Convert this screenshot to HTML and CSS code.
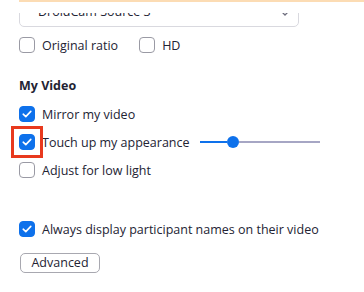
FILE: index.html
```html
<!DOCTYPE html>
<html>
<head>
<meta charset="utf-8">
<link rel="stylesheet" href="styles.css">
</head>
<body>
<div class="panel">
  <div class="accent"></div>
  <div class="select-clip">
    <div class="select">
      <span class="select-text">DroidCam Source 3</span>
      <svg class="chev" width="8" height="5" viewBox="0 0 8 5"><path d="M1 1 L4 4 L7 1" fill="none" stroke="#6e6e7e" stroke-width="1.3"/></svg>
    </div>
  </div>
  <div class="row">
    <label class="check"><span class="box"></span><span>Original ratio</span></label>
    <label class="check hd"><span class="box"></span><span>HD</span></label>
  </div>
  <div class="heading">My Video</div>
  <div class="row row-first">
    <label class="check"><span class="box on"><svg width="10" height="8" viewBox="0 0 10 8"><path d="M1.2 4.2 L3.8 6.6 L8.8 1.4" fill="none" stroke="#fff" stroke-width="1.6" stroke-linecap="round" stroke-linejoin="round"/></svg></span><span>Mirror my video</span></label>
  </div>
  <div class="row">
    <label class="check marked"><span class="box on"><svg width="10" height="8" viewBox="0 0 10 8"><path d="M1.2 4.2 L3.8 6.6 L8.8 1.4" fill="none" stroke="#fff" stroke-width="1.6" stroke-linecap="round" stroke-linejoin="round"/></svg></span><span>Touch up my appearance</span></label>
    <div class="slider">
      <div class="fill"></div>
      <div class="thumb"></div>
      <div class="rest"></div>
    </div>
  </div>
  <div class="row">
    <label class="check"><span class="box"></span><span>Adjust for low light</span></label>
  </div>
  <div class="row row-names">
    <label class="check"><span class="box on"><svg width="10" height="8" viewBox="0 0 10 8"><path d="M1.2 4.2 L3.8 6.6 L8.8 1.4" fill="none" stroke="#fff" stroke-width="1.6" stroke-linecap="round" stroke-linejoin="round"/></svg></span><span>Always display participant names on their video</span></label>
  </div>
  <button class="btn">Advanced</button>
</div>
</body>
</html>
```

FILE: styles.css
```css
html, body {
  margin: 0;
  padding: 0;
  background: #ffffff;
}
body {
  font-family: "Open Sans", "Noto Sans", sans-serif;
  font-size: 12.5px;
  color: #232333;
  width: 364px;
  height: 292px;
  overflow: hidden;
}
.panel {
  display: flex;
  flex-direction: column;
  padding-left: 19px;
}
.accent {
  height: 2px;
  background: #fcdcb4;
}
.select-clip {
  margin-top: 11px;
  height: 15px;
  width: 280px;
  overflow: hidden;
}
.select {
  height: 30px;
  margin-top: -16px;
  box-sizing: border-box;
  border: 1px solid #d9d9df;
  border-radius: 5px;
  display: flex;
  align-items: center;
  justify-content: space-between;
  padding: 0 9px 0 18px;
}
.select-text {
  line-height: 18px;
}
.chev {
  margin-top: 2px;
}
.row {
  display: flex;
  align-items: center;
  height: 28px;
}
.select-clip + .row {
  margin-top: 3px;
}
.check {
  display: flex;
  align-items: center;
  gap: 7px;
  position: relative;
  white-space: nowrap;
}
.check.hd {
  margin-left: 21px;
}
.box {
  width: 16px;
  height: 16px;
  box-sizing: border-box;
  border: 1px solid #9a9aa4;
  border-radius: 4px;
  display: flex;
  align-items: center;
  justify-content: center;
  flex: none;
}
.box.on {
  background: #0e71eb;
  border-color: #0e71eb;
}
.marked::before {
  content: "";
  position: absolute;
  left: -8px;
  top: -8px;
  width: 32px;
  height: 32px;
  box-sizing: border-box;
  border: 3px solid #e8391e;
}
.heading {
  margin-top: 17px;
  height: 20px;
  line-height: 20px;
  font-weight: 700;
}
.row-first {
  margin-top: 4px;
}
.slider {
  margin-left: 10px;
  width: 120px;
  height: 12px;
  display: flex;
  align-items: center;
}
.fill {
  width: 27px;
  height: 2px;
  background: #0e71eb;
}
.thumb {
  width: 12px;
  height: 12px;
  border-radius: 50%;
  background: #0e71eb;
  flex: none;
}
.rest {
  flex: 1;
  height: 2px;
  background: #a6a6c4;
}
.row-names {
  margin-top: 31px;
}
.btn {
  align-self: flex-start;
  margin-top: 10px;
  margin-left: 1px;
  width: 80px;
  height: 20px;
  box-sizing: border-box;
  border: 1px solid #a8a8b0;
  border-radius: 5px;
  background: #fff;
  font-family: "Open Sans", "Noto Sans", sans-serif;
  font-size: 12.5px;
  color: #232333;
  padding: 0;
  line-height: 18px;
}
```
